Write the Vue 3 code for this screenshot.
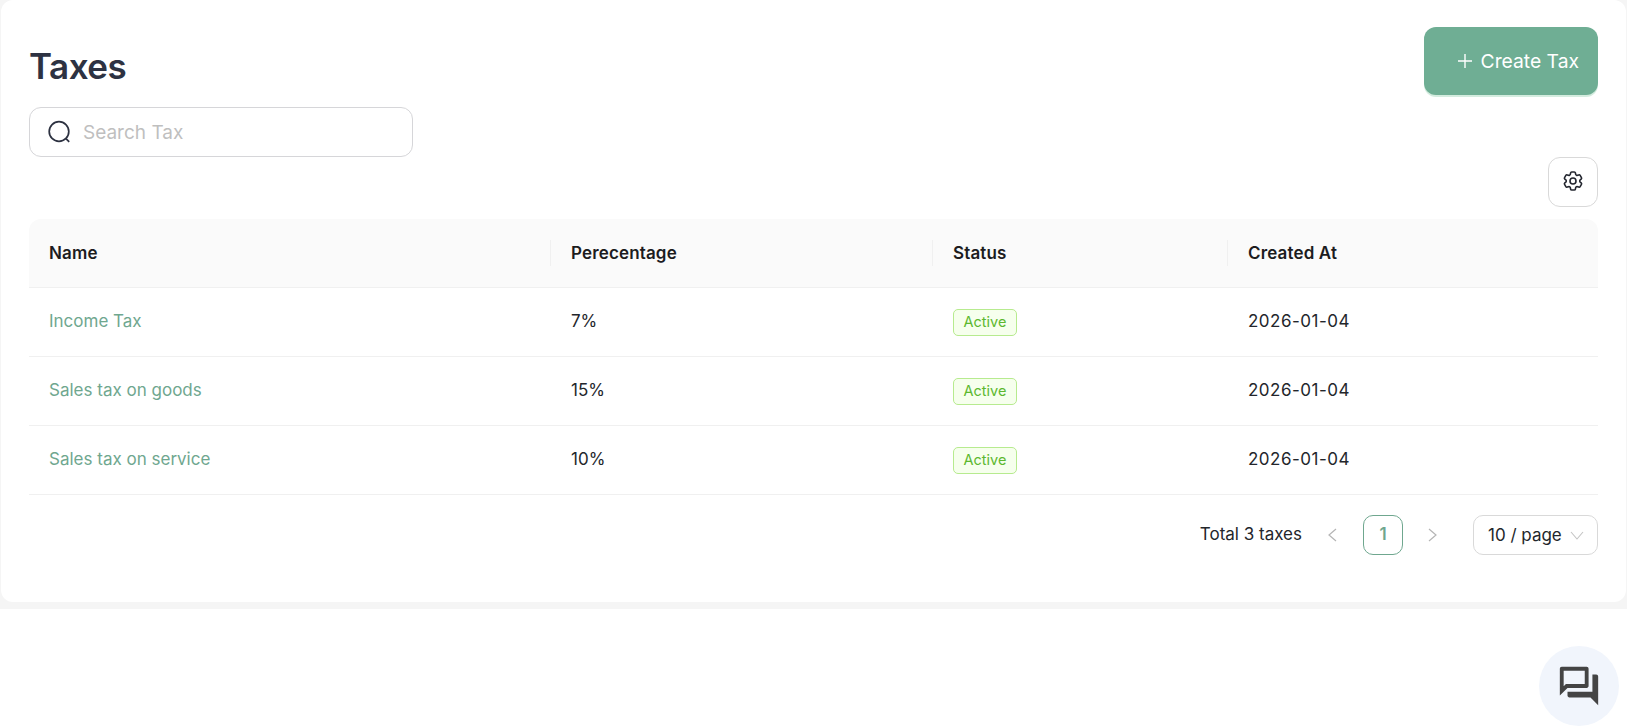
<script setup>
import { ref } from 'vue'

const taxes = ref([
  { name: 'Income Tax', percentage: '7%', status: 'Active', createdAt: '2026-01-04' },
  { name: 'Sales tax on goods', percentage: '15%', status: 'Active', createdAt: '2026-01-04' },
  { name: 'Sales tax on service', percentage: '10%', status: 'Active', createdAt: '2026-01-04' },
])
</script>

<template>
  <div class="page">
    <div class="shell">
      <div class="card">
        <div class="top">
          <div>
            <h1 class="title">Taxes</h1>
            <div class="search">
              <svg class="search-icon" width="24" height="24" viewBox="0 0 24 24" fill="none" stroke="#2c3140" stroke-width="1.7">
                <circle cx="12" cy="11.5" r="9.8" />
                <path d="M19 18.6l3.2 3.2" />
              </svg>
              <span class="placeholder">Search Tax</span>
            </div>
          </div>
          <button class="create">
            <svg width="14" height="14" viewBox="0 0 14 14" stroke="#fff" stroke-width="1.4"><path d="M7 0v14M0 7h14" /></svg>
            <span>Create Tax</span>
          </button>
        </div>

        <div class="tools">
          <button class="gear">
            <svg width="24" height="24" viewBox="0 0 24 24" fill="none" stroke="#23262f" stroke-width="1.6" stroke-linejoin="round">
              <path d="M9.594 3.94c.09-.542.56-.94 1.11-.94h2.593c.55 0 1.02.398 1.11.94l.213 1.281c.063.374.313.686.645.87.074.04.147.083.22.127.325.196.72.257 1.075.124l1.217-.456a1.125 1.125 0 0 1 1.37.49l1.296 2.247a1.125 1.125 0 0 1-.26 1.431l-1.003.827c-.293.241-.438.613-.43.992a7.723 7.723 0 0 1 0 .255c-.008.378.137.75.43.991l1.004.827c.424.35.534.955.26 1.43l-1.298 2.247a1.125 1.125 0 0 1-1.369.491l-1.217-.456c-.355-.133-.75-.072-1.076.124a6.47 6.47 0 0 1-.22.128c-.331.183-.581.495-.644.869l-.213 1.281c-.09.543-.56.94-1.11.94h-2.594c-.55 0-1.019-.398-1.11-.94l-.213-1.281c-.062-.374-.312-.686-.644-.87a6.52 6.52 0 0 1-.22-.127c-.325-.196-.72-.257-1.076-.124l-1.217.456a1.125 1.125 0 0 1-1.369-.49l-1.297-2.247a1.125 1.125 0 0 1 .26-1.431l1.004-.827c.292-.24.437-.613.43-.991a6.932 6.932 0 0 1 0-.255c.007-.38-.138-.751-.43-.992l-1.004-.827a1.125 1.125 0 0 1-.26-1.43l1.297-2.247a1.125 1.125 0 0 1 1.37-.491l1.216.456c.356.133.751.072 1.076-.124.072-.044.146-.086.22-.128.332-.183.582-.495.644-.869l.214-1.28Z" />
              <circle cx="12" cy="12" r="3" />
            </svg>
          </button>
        </div>

        <table class="table">
          <colgroup>
            <col style="width: 521px" />
            <col style="width: 382px" />
            <col style="width: 295px" />
            <col />
          </colgroup>
          <thead>
            <tr>
              <th>Name</th>
              <th>Perecentage</th>
              <th>Status</th>
              <th>Created At</th>
            </tr>
          </thead>
          <tbody>
            <tr v-for="tax in taxes" :key="tax.name">
              <td class="link">{{ tax.name }}</td>
              <td>{{ tax.percentage }}</td>
              <td class="status"><span class="badge">{{ tax.status }}</span></td>
              <td class="date">{{ tax.createdAt }}</td>
            </tr>
          </tbody>
        </table>

        <div class="pagination">
          <span class="total">Total 3 taxes</span>
          <svg class="arrow prev" width="11" height="14" viewBox="0 0 11 14" fill="none" stroke="#b5b5b5" stroke-width="1.2"><path d="M9 1L2 7l7 6" /></svg>
          <span class="page-num">1</span>
          <svg class="arrow next" width="11" height="14" viewBox="0 0 11 14" fill="none" stroke="#b5b5b5" stroke-width="1.2"><path d="M2 1l7 6-7 6" /></svg>
          <div class="size">
            <span>10 / page</span>
            <svg width="14" height="9" viewBox="0 0 14 9" fill="none" stroke="#c4c4c4" stroke-width="1.1"><path d="M1 1l6 7 6-7" /></svg>
          </div>
        </div>
      </div>
    </div>

    <div class="chat">
      <svg width="46" height="46" viewBox="0 0 24 24" fill="#444">
        <path d="M15 4v7H5.17L4 12.17V4h11m1-2H3c-.55 0-1 .45-1 1v14l4-4h10c.55 0 1-.45 1-1V3c0-.55-.45-1-1-1zm5 4h-2v9H6v2c0 .55.45 1 1 1h11l4 4V7c0-.55-.45-1-1-1z" />
      </svg>
    </div>
  </div>
</template>

<style>
html, body {
  margin: 0;
  background: #fff;
}
</style>

<style scoped>
.page {
  height: 727px;
  font-family: Inter, "Liberation Sans", sans-serif;
  color: #23262b;
  position: relative;
  overflow: hidden;
}

.shell {
  padding: 0 1px 7px;
  background: #f5f5f5;
}

.card {
  box-sizing: border-box;
  height: 602px;
  padding: 27px 28px 0 28px;
  background: #fff;
  border-radius: 12px;
}

.top {
  display: flex;
  justify-content: space-between;
  align-items: flex-start;
}

.title {
  margin: 0;
  height: 80px;
  font-size: 35px;
  line-height: 78px;
  font-weight: 600;
  color: #2d3242;
  letter-spacing: -0.5px;
}

.search {
  box-sizing: border-box;
  width: 384px;
  height: 50px;
  display: flex;
  align-items: center;
  gap: 12px;
  padding-left: 17px;
  border: 1px solid #d6d6d9;
  border-radius: 12px;
}

.search-icon {
  flex: none;
}

.placeholder {
  font-size: 19px;
  color: #bfbfbf;
}

.create {
  box-sizing: border-box;
  width: 174px;
  height: 68px;
  display: flex;
  align-items: center;
  justify-content: flex-end;
  gap: 9px;
  padding: 0 19px 0 0;
  margin: 0;
  border: 0;
  border-radius: 12px;
  background: #6fae94;
  box-shadow: 0 2px 0 #d4ecdf;
  color: #fff;
  font: 400 19.3px Inter, sans-serif;
}

.tools {
  display: flex;
  justify-content: flex-end;
}

.gear {
  box-sizing: border-box;
  width: 50px;
  height: 50px;
  display: flex;
  align-items: center;
  justify-content: center;
  padding: 0 0 2px;
  background: #fff;
  border: 1px solid #d9d9d9;
  border-radius: 12px;
}

.table {
  width: 100%;
  margin-top: 12px;
  border-collapse: separate;
  border-spacing: 0;
  table-layout: fixed;
}

th {
  position: relative;
  box-sizing: border-box;
  height: 69px;
  padding: 0 21px 1px;
  background: #fafafa;
  border-bottom: 1px solid #f0f0f0;
  text-align: left;
  font-size: 17px;
  font-weight: 600;
  letter-spacing: 0.15px;
  color: #1c1c1e;
}

th:first-child {
  padding-left: 20px;
  border-top-left-radius: 12px;
}

th:last-child {
  border-top-right-radius: 12px;
}

th:not(:first-child)::before {
  content: "";
  position: absolute;
  left: 0;
  top: 21px;
  height: 26px;
  width: 1px;
  background: #f0f0f0;
}

td {
  box-sizing: border-box;
  height: 69px;
  padding: 0 21px 2px;
  border-bottom: 1px solid #f0f0f0;
  font-size: 17px;
  color: #23262b;
}

td:first-child {
  padding-left: 20px;
}

td.status {
  padding-bottom: 0;
}

.link {
  color: #6fa78f;
}

.date {
  letter-spacing: 0.5px;
}

.badge {
  display: inline-block;
  box-sizing: border-box;
  height: 27px;
  line-height: 24px;
  padding: 0 9.5px;
  font-size: 14.5px;
  color: #5cb82f;
  background: #f6ffed;
  border: 1px solid #b7eb8f;
  border-radius: 5px;
  vertical-align: middle;
}

.pagination {
  display: flex;
  align-items: center;
  justify-content: flex-end;
  height: 40px;
  margin-top: 20px;
  font-size: 17px;
}

.total {
  margin-right: 25px;
  margin-top: -2px;
}

.prev {
  margin-right: 25px;
}

.next {
  margin-left: 24px;
  margin-right: 35px;
}

.page-num {
  box-sizing: border-box;
  width: 40px;
  height: 40px;
  line-height: 37px;
  text-align: center;
  border: 1px solid #6fa78f;
  border-radius: 10px;
  color: #6fa78f;
  font-weight: 600;
}

.size {
  box-sizing: border-box;
  width: 125px;
  height: 40px;
  display: flex;
  align-items: center;
  justify-content: space-between;
  padding: 0 13px 0 14px;
  border: 1px solid #d9d9d9;
  border-radius: 10px;
}

.chat {
  position: absolute;
  left: 1539px;
  top: 646px;
  width: 80px;
  height: 80px;
  display: flex;
  align-items: center;
  justify-content: center;
  border-radius: 50%;
  background: #f1f5fc;
}
</style>
